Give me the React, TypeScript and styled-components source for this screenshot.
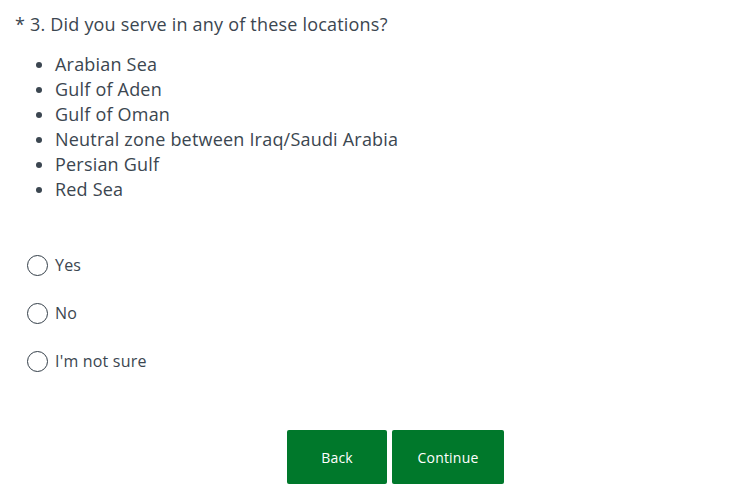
import styled, { createGlobalStyle } from 'styled-components'

const GlobalStyle = createGlobalStyle`
  body {
    margin: 0;
    background: #ffffff;
    font-family: 'Open Sans', 'Liberation Sans', sans-serif;
    color: #3b4650;
    letter-spacing: 0.2px;
  }
`;

const Page = styled.div`
  width: 740px;
  height: 499px;
  padding: 12px 15px 0 15px;
  box-sizing: border-box;
`;

const QuestionTitle = styled.h4`
  margin: 0;
  font-size: 18px;
  font-weight: 400;
  line-height: 24px;
`;

const LocationList = styled.ul`
  margin: 16px 0 0 0;
  padding-left: 40px;
  font-size: 18px;
  line-height: 25px;
`;

const OptionList = styled.div`
  margin-top: 51px;
  padding-left: 12px;
  display: flex;
  flex-direction: column;
  gap: 24px;
`;

const Option = styled.label`
  display: flex;
  align-items: center;
  gap: 7px;
  height: 24px;
  font-size: 16px;
  cursor: pointer;
`;

const RadioCircle = styled.span`
  width: 21px;
  height: 21px;
  border: 1px solid #333e48;
  border-radius: 50%;
  box-sizing: border-box;
`;

const ButtonRow = styled.div`
  margin-top: 57px;
  padding-left: 272px;
  display: flex;
  gap: 5px;
`;

const NavButton = styled.button<{ $width: number }>`
  width: ${(p) => p.$width}px;
  height: 54px;
  border: none;
  border-radius: 2px;
  background: #00782b;
  color: #ffffff;
  font-family: inherit;
  font-size: 14px;
  letter-spacing: 0.2px;
  cursor: pointer;
`;

const locations = [
  'Arabian Sea',
  'Gulf of Aden',
  'Gulf of Oman',
  'Neutral zone between Iraq/Saudi Arabia',
  'Persian Gulf',
  'Red Sea',
];

const options = ['Yes', 'No', "I'm not sure"];

const App = () => {
  return (
    <Page>
      <GlobalStyle />
      <QuestionTitle>* 3. Did you serve in any of these locations?</QuestionTitle>
      <LocationList>
        {locations.map((loc) => (
          <li key={loc}>{loc}</li>
        ))}
      </LocationList>
      <OptionList>
        {options.map((opt) => (
          <Option key={opt}>
            <RadioCircle />
            {opt}
          </Option>
        ))}
      </OptionList>
      <ButtonRow>
        <NavButton $width={100}>Back</NavButton>
        <NavButton $width={112}>Continue</NavButton>
      </ButtonRow>
    </Page>
  );
};

export default App
